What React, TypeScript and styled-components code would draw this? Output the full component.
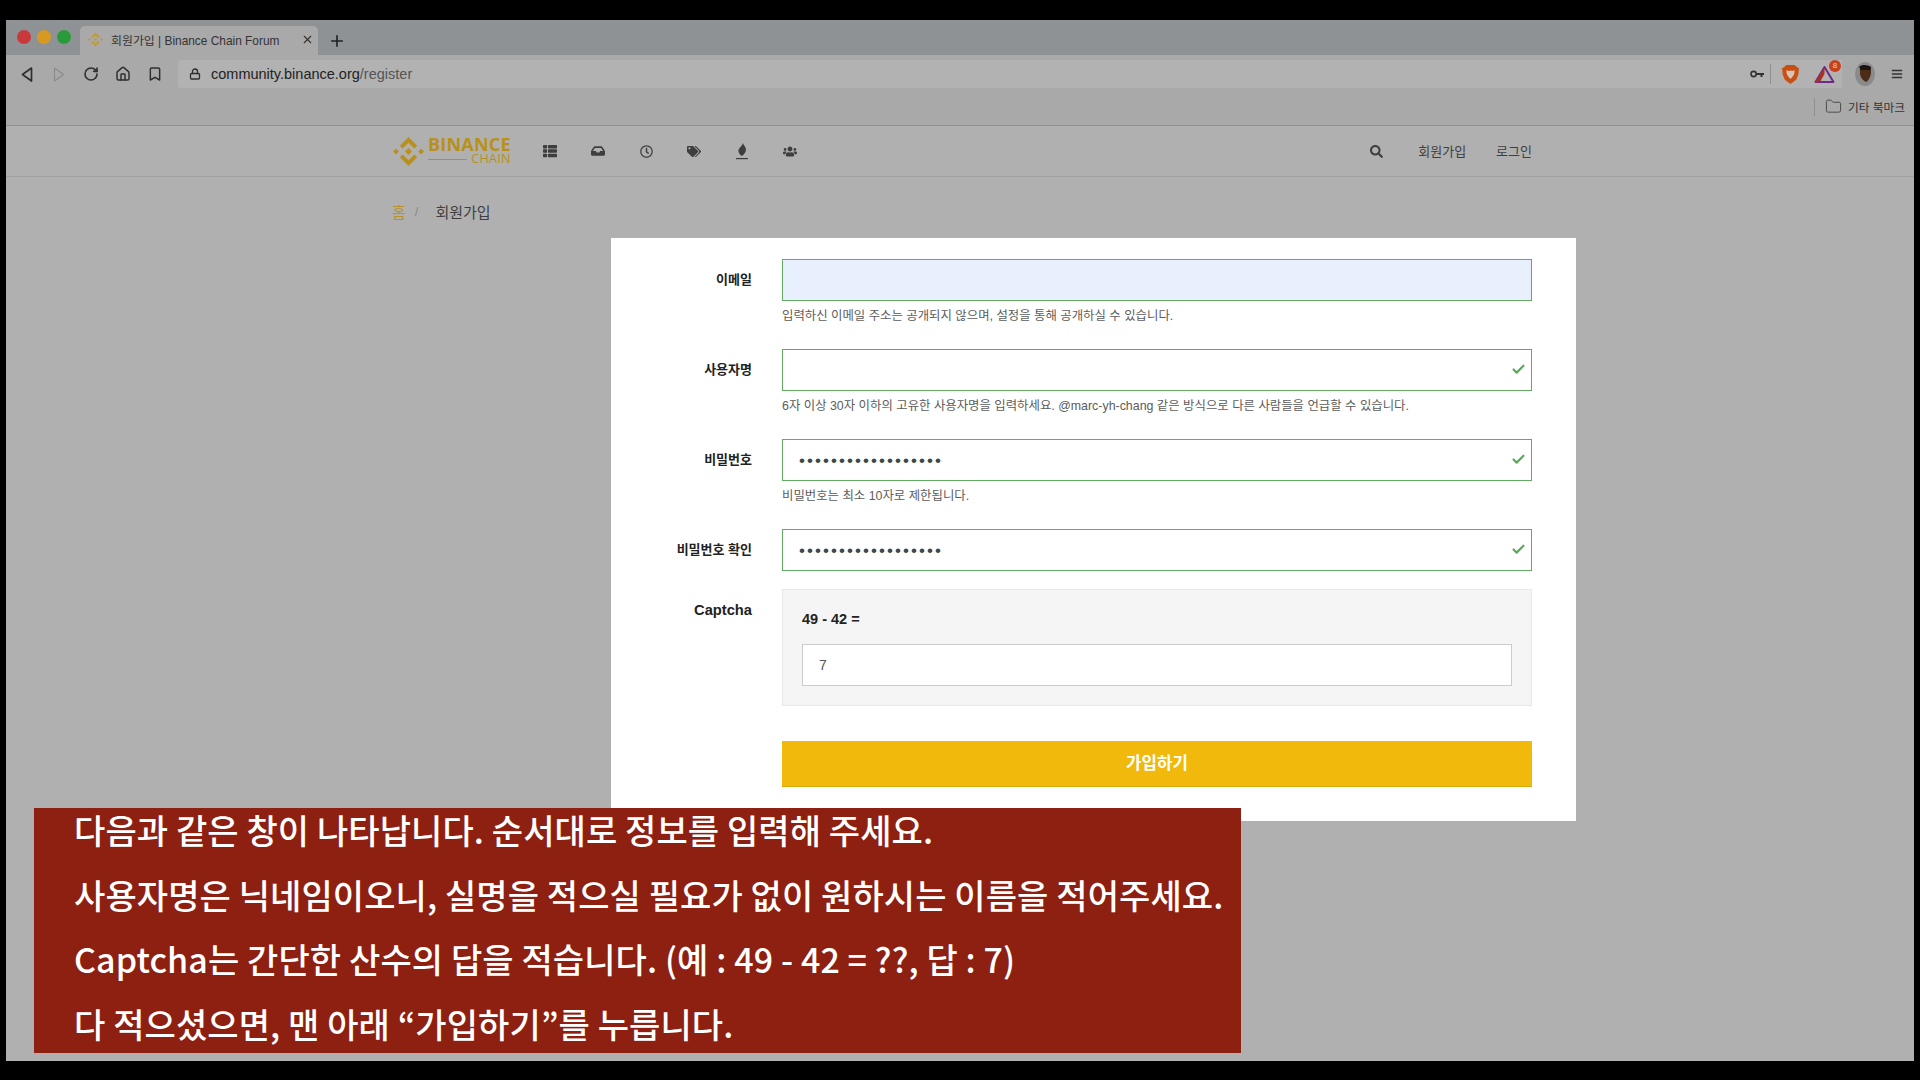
import React from 'react';
import styled, { createGlobalStyle } from 'styled-components';
import { FaInbox, FaRegClock, FaSearch, FaTags, FaThList, FaUsers } from 'react-icons/fa';
import { LuBookmark, LuCheck, LuFolder, LuHouse, LuLock, LuMenu, LuPlus, LuRotateCw, LuX } from 'react-icons/lu';

const UI_FONT = `"Liberation Sans", "Noto Sans CJK KR", sans-serif`;
const GOLD = '#b8901a';

const GlobalStyle = createGlobalStyle`
  html, body {
    margin: 0;
    background: #000;
    overflow: hidden;
  }
  * {
    box-sizing: border-box;
  }
`;

const Frame = styled.div`
  position: relative;
  width: 1920px;
  height: 1080px;
  background: #000;
  padding: 20px 6px 19px 6px;
  font-family: ${UI_FONT};
`;

const Screen = styled.div`
  width: 1908px;
  height: 1041px;
  background: #b0b0b0;
  overflow: hidden;
`;

const TabStrip = styled.div`
  height: 35px;
  background: #8f9294;
  display: flex;
  align-items: flex-end;
  padding-left: 11px;
`;

const Lights = styled.div`
  display: flex;
  gap: 6px;
  align-self: flex-start;
  margin-top: 10px;
  width: 63px;
`;

const Light = styled.span<{ color: string }>`
  width: 14px;
  height: 14px;
  border-radius: 50%;
  background: ${({ color }) => color};
`;

const Tab = styled.div`
  width: 238px;
  height: 29px;
  background: #a9a9a9;
  border-radius: 5px 5px 0 0;
  display: flex;
  align-items: center;
  padding: 0 4px 2px 8px;
  font-size: 11.9px;
  color: #333;
`;

const Favicon = styled.span`
  display: flex;
  color: #c79a1c;
`;

const TabTitle = styled.span`
  margin-left: 8px;
  flex: 1;
  white-space: nowrap;
`;

const NewTab = styled.div`
  width: 38px;
  height: 29px;
  display: flex;
  align-items: center;
  justify-content: center;
  color: #222;
`;

const Toolbar = styled.div`
  height: 33px;
  background: #a9a9a9;
  display: flex;
  align-items: flex-end;
  padding-left: 12px;
  color: #2f2f2f;
`;

const NavButtons = styled.div`
  display: flex;
  align-items: center;
  height: 28px;
  width: 160px;
  gap: 15px;
`;

const NavButton = styled.span<{ faded?: boolean }>`
  width: 17px;
  display: flex;
  justify-content: center;
  color: ${({ faded }) => (faded ? '#8b8b8b' : '#2f2f2f')};
`;

const AddressBar = styled.div`
  width: 1664px;
  height: 28px;
  background: #b2b2b2;
  border-radius: 3px 0 0 3px;
  display: flex;
  align-items: center;
  padding-left: 11px;
`;

const Url = styled.div`
  margin-left: 10px;
  font-size: 14.5px;
  color: #222;
  flex: 1;

  span {
    color: #555;
  }
`;

const Extensions = styled.div`
  display: flex;
  align-items: center;
  height: 28px;
`;

const KeyWrap = styled.span`
  display: flex;
  width: 26px;
  justify-content: center;
`;

const Separator = styled.span`
  width: 1px;
  height: 20px;
  background: #8e8e8e;
`;

const BraveWrap = styled.span`
  display: flex;
  width: 38px;
  justify-content: center;
`;

const BatWrap = styled.span`
  position: relative;
  display: flex;
  width: 30px;
  margin-right: 3px;
  justify-content: center;
`;

const Badge = styled.span`
  position: absolute;
  top: -6px;
  right: -2px;
  width: 12px;
  height: 12px;
  border-radius: 50%;
  background: #c9401c;
  color: #e8d8d0;
  font-size: 8px;
  line-height: 12px;
  text-align: center;
`;

const ToolbarEnd = styled.div`
  display: flex;
  align-items: center;
  height: 28px;
  margin-left: 13px;
`;

const Avatar = styled.span`
  width: 20px;
  height: 24px;
  border-radius: 50%;
  background: #8a8a8a;
  display: flex;
  align-items: center;
  justify-content: center;
  margin-right: 15px;
`;

const BookmarksBar = styled.div`
  height: 38px;
  background: #a9a9a9;
  border-bottom: 1px solid #8f8f8f;
  display: flex;
  align-items: center;
  justify-content: flex-end;
  padding-right: 9px;
  font-size: 11.7px;
  color: #333;
`;

const BookmarkDivider = styled.span`
  width: 1px;
  height: 18px;
  background: #8e8e8e;
  margin-right: 10px;
`;

const BookmarkFolder = styled.span`
  display: flex;
  margin-right: 6px;
  color: #4c4c4c;
`;

const SiteNav = styled.nav`
  height: 51px;
  border-bottom: 1px solid #a1a1a1;
  display: flex;
  align-items: center;
  padding: 0 382px 0 387px;
  color: #3e3e3e;
`;

const Logo = styled.div`
  display: flex;
  align-items: center;
  width: 150px;
  gap: 4px;
  color: ${GOLD};
`;

const LogoText = styled.div`
  display: flex;
  flex-direction: column;
  font-family: "Open Sans", sans-serif;
  line-height: 1;
  margin-top: -2px;
`;

const LogoName = styled.span`
  font-size: 18px;
  font-weight: 700;
  letter-spacing: 0.2px;
`;

const LogoSub = styled.span`
  display: flex;
  align-items: center;
  font-size: 12.5px;
  letter-spacing: 0.3px;

  &::before {
    content: '';
    flex: 1;
    height: 1px;
    background: ${GOLD};
    margin-right: 4px;
  }
`;

const NavIcons = styled.div`
  display: flex;
  align-items: center;
  gap: 34px;
  flex: 1;
`;

const NavIcon = styled.span<{ size?: number }>`
  width: 14px;
  height: 14px;
  display: flex;
  align-items: center;
  justify-content: center;
  font-size: ${({ size }) => size ?? 14}px;
`;

const NavSide = styled.div`
  display: flex;
  align-items: center;
  font-size: 13px;
  gap: 30px;
  padding-bottom: 2px;
`;

const SearchIcon = styled.span`
  display: flex;
  font-size: 13px;
  margin: 2px 5px 0 0;
`;

const Crumbs = styled.div`
  height: 61px;
  display: flex;
  align-items: center;
  padding: 8px 0 0 386px;
  font-size: 15px;
  color: #3f3f3f;
`;

const CrumbHome = styled.span`
  color: #b8902c;
`;

const CrumbSlash = styled.span`
  color: #8a8a8a;
  margin: 0 17px 0 9px;
  font-size: 13px;
`;

const Card = styled.form`
  width: 965px;
  height: 583px;
  margin-left: 605px;
  background: #fff;
  padding: 21px 44px 0 0;
`;

const Row = styled.div`
  display: grid;
  grid-template-columns: 141px 750px;
  column-gap: 30px;
  margin-bottom: 18px;
`;

const Label = styled.label<{ latin?: boolean }>`
  text-align: right;
  font-size: ${({ latin }) => (latin ? 14.7 : 13)}px;
  font-weight: 700;
  color: #222;
  line-height: 42px;
`;

const FieldWrap = styled.div`
  position: relative;
`;

const Input = styled.input<{ filled?: boolean }>`
  display: block;
  width: 100%;
  height: 42px;
  border: 1px solid #63aa63;
  background: ${({ filled }) => (filled ? '#e8f0fe' : '#fff')};
  padding: 1px 16px 0;
  font-family: ${UI_FONT};
  font-size: 17px;
  color: #444;
  outline: none;
  letter-spacing: 2.05px;
`;

const Tick = styled.span`
  position: absolute;
  right: 6px;
  top: 13px;
  display: flex;
  color: #55ab55;
`;

const Help = styled.div`
  margin-top: 5px;
  margin-bottom: 5px;
  height: 20px;
  line-height: 20px;
  font-size: 12.4px;
  color: #5c5c5c;
  white-space: nowrap;
`;

const CaptchaBox = styled.div`
  height: 117px;
  background: #f5f5f5;
  border: 1px solid #e8e8e8;
  padding: 19px;
`;

const CaptchaQuestion = styled.div`
  font-size: 14.5px;
  font-weight: 700;
  color: #222;
  line-height: 20px;
  margin-bottom: 15px;
`;

const CaptchaInput = styled.input`
  display: block;
  width: 100%;
  height: 42px;
  border: 1px solid #ccc;
  background: #fff;
  padding: 0 16px;
  font-family: ${UI_FONT};
  font-size: 14px;
  color: #555;
  outline: none;
`;

const Submit = styled.button`
  display: block;
  margin: 35px 0 0 171px;
  width: 750px;
  height: 46px;
  background: #f0b90b;
  border: 0;
  border-bottom: 1px solid #d9a80c;
  padding: 0 0 3px;
  color: #fff;
  font-family: ${UI_FONT};
  font-size: 16.8px;
  font-weight: 700;
`;

const Caption = styled.div`
  position: absolute;
  left: 34px;
  top: 808px;
  width: 1207px;
  height: 245px;
  background: #8e2012;
  padding-left: 40px;
  color: #fff;
  font-family: "Noto Sans CJK KR", sans-serif;
  font-size: 34px;
  font-weight: 500;
  letter-spacing: 0.1px;
  white-space: nowrap;
`;

const CaptionLine = styled.div`
  height: 64.5px;
  line-height: 44px;
`;

const BinanceMark: React.FC<{ size: number }> = ({ size }) => (
  <svg width={size} height={size} viewBox="0 0 32 32" fill="currentColor">
    <path d="M16 1l9 9-3 3-6-6-6 6-3-3z" />
    <path d="M0 16l3-3 3 3-3 3zM26 16l3-3 3 3-3 3zM12.500 16l3.500-3.500 3.500 3.500-3.500 3.500z" />
    <path d="M16 31l-9-9 3-3 6 6 6-6 3 3z" />
  </svg>
);

const BackArrow: React.FC = () => (
  <svg width="14" height="17" viewBox="0 0 14 17" fill="none" stroke="currentColor" strokeWidth="1.7" strokeLinejoin="round">
    <path d="M11.500 2L2.500 8.500l9 6.500z" />
  </svg>
);

const ForwardArrow: React.FC = () => (
  <svg width="14" height="17" viewBox="0 0 14 17" fill="none" stroke="currentColor" strokeWidth="1.2" strokeLinejoin="round">
    <path d="M2.500 2l9 6.500-9 6.500z" />
  </svg>
);

const KeyIcon: React.FC = () => (
  <svg width="14" height="8" viewBox="0 0 14 8" fill="none">
    <circle cx="3.600" cy="4" r="2.600" stroke="#333" strokeWidth="1.600" />
    <path d="M6 3h8v2h-1.500v2h-2V5H6z" fill="#333" />
  </svg>
);

const BraveIcon: React.FC = () => (
  <svg width="17" height="19" viewBox="0 0 16 18">
    <path d="M4 0h8l2 2 2 1-.6 6-2 5L8 18l-5.400-4-2-5L0 3l2-1z" fill="#c94f14" />
    <path d="M4 5l2.500.8L8 5.200l1.500.6L12 5l-.6 4-2.400 3.200L8 13l-1-.8L4.600 9z" fill="#d9c4b8" />
  </svg>
);

const BatIcon: React.FC = () => (
  <svg width="21" height="17" viewBox="0 0 21 17" fill="none">
    <path d="M10.500 1L1.500 16h18z" stroke="#6e2a86" strokeWidth="2" strokeLinejoin="round" />
    <path d="M10.500 1L1 16.500 6 16l4.500-8z" fill="#a8321f" />
  </svg>
);

const AvatarFace: React.FC = () => (
  <svg width="14" height="18" viewBox="0 0 14 18">
    <path d="M2 3c2-3 9-3 11 0v4c0 5-3 9-5 10-2-1-5-3-6-8z" fill="#4a2c17" />
    <path d="M1 2c3-3 9-2 12 0l-1 3H3z" fill="#1c1410" />
  </svg>
);

const FlameIcon: React.FC = () => (
  <svg width="14" height="17" viewBox="0 0 14 17" fill="currentColor">
    <path d="M8 0c.4 2.400 3 3.600 3 6.600 0 2.800-2 4.900-4.200 6.400C5 11.800 3.400 10 3.400 7.800 3.400 5 7 3.500 8 0z" />
    <rect x="1" y="15" width="12" height="1.200" />
  </svg>
);

const LINES = [
  '다음과 같은 창이 나타납니다. 순서대로 정보를 입력해 주세요.',
  '사용자명은 닉네임이오니, 실명을 적으실 필요가 없이 원하시는 이름을 적어주세요.',
  'Captcha는 간단한 산수의 답을 적습니다. (예 : 49 - 42 = ??, 답 : 7)',
  '다 적으셨으면, 맨 아래 “가입하기”를 누릅니다.',
];

const PASSWORD = 'abcdefghijklmnopqr';

const App: React.FC = () => (
  <Frame>
    <GlobalStyle />
    <Screen>
      <TabStrip>
        <Lights>
          <Light color="#c9383a" />
          <Light color="#d69a22" />
          <Light color="#2b9a3a" />
        </Lights>
        <Tab>
          <Favicon>
            <BinanceMark size={15} />
          </Favicon>
          <TabTitle>회원가입 | Binance Chain Forum</TabTitle>
          <LuX size={13} />
        </Tab>
        <NewTab>
          <LuPlus size={18} strokeWidth={2.2} />
        </NewTab>
      </TabStrip>
      <Toolbar>
        <NavButtons>
          <NavButton><BackArrow /></NavButton>
          <NavButton faded><ForwardArrow /></NavButton>
          <NavButton><LuRotateCw size={16} strokeWidth={2.4} /></NavButton>
          <NavButton><LuHouse size={16} strokeWidth={2.2} /></NavButton>
          <NavButton><LuBookmark size={16} strokeWidth={2.2} /></NavButton>
        </NavButtons>
        <AddressBar>
          <LuLock size={12} strokeWidth={2.6} />
          <Url>community.binance.org<span>/register</span></Url>
          <Extensions>
            <KeyWrap><KeyIcon /></KeyWrap>
            <Separator />
            <BraveWrap><BraveIcon /></BraveWrap>
            <BatWrap>
              <BatIcon />
              <Badge>8</Badge>
            </BatWrap>
          </Extensions>
        </AddressBar>
        <ToolbarEnd>
          <Avatar><AvatarFace /></Avatar>
          <LuMenu size={14} strokeWidth={2.2} color="#333" />
        </ToolbarEnd>
      </Toolbar>
      <BookmarksBar>
        <BookmarkDivider />
        <BookmarkFolder><LuFolder size={17} strokeWidth={1.4} /></BookmarkFolder>
        기타 북마크
      </BookmarksBar>
      <SiteNav>
        <Logo>
          <BinanceMark size={31} />
          <LogoText>
            <LogoName>BINANCE</LogoName>
            <LogoSub>CHAIN</LogoSub>
          </LogoText>
        </Logo>
        <NavIcons>
          <NavIcon><FaThList /></NavIcon>
          <NavIcon><FaInbox /></NavIcon>
          <NavIcon size={13}><FaRegClock /></NavIcon>
          <NavIcon size={15}><FaTags /></NavIcon>
          <NavIcon><FlameIcon /></NavIcon>
          <NavIcon size={17}><FaUsers /></NavIcon>
        </NavIcons>
        <NavSide>
          <SearchIcon><FaSearch /></SearchIcon>
          <span>회원가입</span>
          <span>로그인</span>
        </NavSide>
      </SiteNav>
      <Crumbs>
        <CrumbHome>홈</CrumbHome>
        <CrumbSlash>/</CrumbSlash>
        회원가입
      </Crumbs>
      <Card>
        <Row>
          <Label>이메일</Label>
          <div>
            <Input filled readOnly />
            <Help>입력하신 이메일 주소는 공개되지 않으며, 설정을 통해 공개하실 수 있습니다.</Help>
          </div>
        </Row>
        <Row>
          <Label>사용자명</Label>
          <div>
            <FieldWrap>
              <Input readOnly />
              <Tick><LuCheck size={15} strokeWidth={3.4} /></Tick>
            </FieldWrap>
            <Help>6자 이상 30자 이하의 고유한 사용자명을 입력하세요. @marc-yh-chang 같은 방식으로 다른 사람들을 언급할 수 있습니다.</Help>
          </div>
        </Row>
        <Row>
          <Label>비밀번호</Label>
          <div>
            <FieldWrap>
              <Input type="password" value={PASSWORD} readOnly />
              <Tick><LuCheck size={15} strokeWidth={3.4} /></Tick>
            </FieldWrap>
            <Help>비밀번호는 최소 10자로 제한됩니다.</Help>
          </div>
        </Row>
        <Row>
          <Label>비밀번호 확인</Label>
          <FieldWrap>
            <Input type="password" value={PASSWORD} readOnly />
            <Tick><LuCheck size={15} strokeWidth={3.4} /></Tick>
          </FieldWrap>
        </Row>
        <Row>
          <Label latin>Captcha</Label>
          <CaptchaBox>
            <CaptchaQuestion>49 - 42 =</CaptchaQuestion>
            <CaptchaInput value="7" readOnly />
          </CaptchaBox>
        </Row>
        <Submit type="button">가입하기</Submit>
      </Card>
    </Screen>
    <Caption>
      {LINES.map((line) => (
        <CaptionLine key={line}>{line}</CaptionLine>
      ))}
    </Caption>
  </Frame>
);

export default App;
